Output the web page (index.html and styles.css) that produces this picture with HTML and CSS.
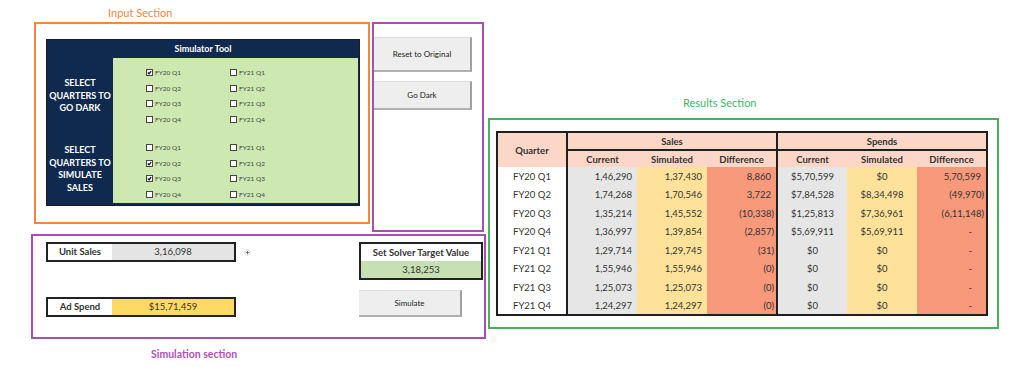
FILE: index.html
```html
<!DOCTYPE html>
<html lang="en">
<head>
    <meta charset="UTF-8">
    <meta name="viewport" content="width=device-width, initial-scale=1.0">
    <title>Simulator Tool</title>
    <link rel="stylesheet" href="styles.css">
</head>
<body>
    <div class="page">
        <div class="left">
            <div class="section-label input-label">Input Section</div>
            <div class="top-row">
                <div class="input-box">
                    <div class="sim-tool">
                        <div class="tool-title">Simulator Tool</div>
                        <div class="tool-group first">
                            <div class="group-label">SELECT<br>QUARTERS TO<br>GO DARK</div>
                            <div class="checks">
                                <div class="check"><span class="cb on"><svg viewBox="0 0 6 6"><path d="M1 3 L2.5 4.5 L5 1.3"/></svg></span>FY20 Q1</div>
                                <div class="check"><span class="cb"></span>FY21 Q1</div>
                                <div class="check"><span class="cb"></span>FY20 Q2</div>
                                <div class="check"><span class="cb"></span>FY21 Q2</div>
                                <div class="check"><span class="cb"></span>FY20 Q3</div>
                                <div class="check"><span class="cb"></span>FY21 Q3</div>
                                <div class="check"><span class="cb"></span>FY20 Q4</div>
                                <div class="check"><span class="cb"></span>FY21 Q4</div>
                            </div>
                        </div>
                        <div class="tool-group second">
                            <div class="group-label">SELECT<br>QUARTERS TO<br>SIMULATE<br>SALES</div>
                            <div class="checks">
                                <div class="check"><span class="cb"></span>FY20 Q1</div>
                                <div class="check"><span class="cb"></span>FY21 Q1</div>
                                <div class="check"><span class="cb on"><svg viewBox="0 0 6 6"><path d="M1 3 L2.5 4.5 L5 1.3"/></svg></span>FY20 Q2</div>
                                <div class="check"><span class="cb"></span>FY21 Q2</div>
                                <div class="check"><span class="cb on"><svg viewBox="0 0 6 6"><path d="M1 3 L2.5 4.5 L5 1.3"/></svg></span>FY20 Q3</div>
                                <div class="check"><span class="cb"></span>FY21 Q3</div>
                                <div class="check"><span class="cb"></span>FY20 Q4</div>
                                <div class="check"><span class="cb"></span>FY21 Q4</div>
                            </div>
                        </div>
                    </div>
                </div>
                <div class="button-box">
                    <div class="xl-button reset">Reset to Original</div>
                    <div class="xl-button dark">Go Dark</div>
                </div>
            </div>
            <div class="simulation-box">
                <div class="fields">
                    <div class="field">
                        <div class="field-name">Unit Sales</div>
                        <div class="field-value units">3,16,098</div>
                    </div>
                    <div class="field">
                        <div class="field-name">Ad Spend</div>
                        <div class="field-value spend">$15,71,459</div>
                    </div>
                </div>
                <svg class="cursor-mark" viewBox="0 0 8 8">
                    <circle cx="4" cy="4" r="3" fill="none" stroke="#9a9a9a" stroke-width="0.8" stroke-dasharray="1.2 0.8"/>
                    <path d="M4 2.2 V5.8 M2.2 4 H5.8" stroke="#555" stroke-width="0.9"/>
                </svg>
                <div class="solver">
                    <div class="solver-box">
                        <div class="solver-title">Set Solver Target Value</div>
                        <div class="solver-value">3,18,253</div>
                    </div>
                    <div class="xl-button simulate">Simulate</div>
                </div>
            </div>
            <div class="section-label simulation-label">Simulation section</div>
        </div>

        <div class="right">
            <div class="section-label results-label">Results Section</div>
            <div class="results-box">
                <table class="results">
                    <colgroup>
                        <col class="col"><col class="col"><col class="col"><col class="col">
                        <col class="col"><col class="col"><col class="col">
                    </colgroup>
                    <thead>
                        <tr class="head-top">
                            <th rowspan="2" class="quarter-head">Quarter</th>
                            <th colspan="3" class="group-head">Sales</th>
                            <th colspan="3" class="group-head">Spends</th>
                        </tr>
                        <tr class="head-sub">
                            <th class="split">Current</th>
                            <th>Simulated</th>
                            <th>Difference</th>
                            <th class="split">Current</th>
                            <th>Simulated</th>
                            <th>Difference</th>
                        </tr>
                    </thead>
                    <tbody id="rows">
                        <!-- rows are filled in by the script below -->
                    </tbody>
                </table>
            </div>
        </div>
    </div>

    <script>
        const results = [
            { quarter: "FY20 Q1", sales: ["1,46,290", "1,37,430", "8,860"], spends: ["$5,70,599", "$0", "5,70,599"] },
            { quarter: "FY20 Q2", sales: ["1,74,268", "1,70,546", "3,722"], spends: ["$7,84,528", "$8,34,498", "(49,970)"] },
            { quarter: "FY20 Q3", sales: ["1,35,214", "1,45,552", "(10,338)"], spends: ["$1,25,813", "$7,36,961", "(6,11,148)"] },
            { quarter: "FY20 Q4", sales: ["1,36,997", "1,39,854", "(2,857)"], spends: ["$5,69,911", "$5,69,911", "-"] },
            { quarter: "FY21 Q1", sales: ["1,29,714", "1,29,745", "(31)"], spends: ["$0", "$0", "-"] },
            { quarter: "FY21 Q2", sales: ["1,55,946", "1,55,946", "(0)"], spends: ["$0", "$0", "-"] },
            { quarter: "FY21 Q3", sales: ["1,25,073", "1,25,073", "(0)"], spends: ["$0", "$0", "-"] },
            { quarter: "FY21 Q4", sales: ["1,24,297", "1,24,297", "(0)"], spends: ["$0", "$0", "-"] },
        ];

        function diffClass(value) {
            if (value === "-") return "diff dash";
            return value.startsWith("(") ? "diff" : "diff pos";
        }

        const body = document.getElementById('rows');
        results.forEach(row => {
            const tr = document.createElement('tr');
            tr.innerHTML = `
                <td class="quarter">${row.quarter}</td>
                <td class="current split num">${row.sales[0]}</td>
                <td class="simulated num">${row.sales[1]}</td>
                <td class="${diffClass(row.sales[2])}">${row.sales[2]}</td>
                <td class="current split money">${row.spends[0]}</td>
                <td class="simulated money">${row.spends[1]}</td>
                <td class="${diffClass(row.spends[2])}">${row.spends[2]}</td>
            `;
            body.appendChild(tr);
        });
    </script>
</body>
</html>
```

FILE: styles.css
```css
body {
    margin: 0;
    background: white;
    font-family: Lato, "Liberation Sans", sans-serif;
    color: #333;
}
.page {
    display: flex;
    align-items: flex-start;
    gap: 2px;
    padding-left: 31px;
}
.left {
    width: 455px;
}
.section-label {
    font-size: 11px;
}
.input-label {
    color: #f0883d;
    height: 16px;
    line-height: 14px;
    padding-top: 6px;
    padding-left: 77px;
}
.top-row {
    display: flex;
    align-items: flex-start;
    gap: 2px;
    margin-left: 3px;
}
.input-box {
    box-sizing: border-box;
    width: 336px;
    height: 202px;
    border: 2px solid #f0883d;
    padding: 15px 0 0 10px;
}
.sim-tool {
    width: 314px;
    height: 167px;
    box-sizing: border-box;
    border: 1px solid #1b1b1b;
    background-color: #0f2a4e;
    display: flex;
    flex-direction: column;
}
.tool-title {
    height: 18px;
    line-height: 18px;
    text-align: center;
    color: white;
    font-weight: 700;
    font-size: 9px;
}
.tool-group {
    display: flex;
}
.tool-group.first {
    height: 76px;
}
.tool-group.second {
    height: 70px;
}
.group-label {
    width: 66px;
    display: flex;
    align-items: center;
    justify-content: center;
    text-align: center;
    color: white;
    font-weight: 700;
    font-size: 9px;
    line-height: 12.5px;
}
.checks {
    flex: 1;
    margin-right: 1px;
    background-color: #cde9b1;
    display: grid;
    grid-template-columns: 84px 84px;
    grid-auto-rows: 15.5px;
    padding-left: 33px;
}
.tool-group.first .checks {
    padding-top: 7px;
}
.tool-group.second .checks {
    padding-top: 6px;
    margin-bottom: 1px;
}
.check {
    display: flex;
    align-items: center;
    gap: 2px;
    font-size: 6.5px;
    color: #444;
}
.cb {
    box-sizing: border-box;
    width: 7px;
    height: 7px;
    border: 1px solid #444;
    background-color: white;
    display: flex;
}
.cb svg {
    width: 5px;
    height: 5px;
}
.cb svg path {
    fill: none;
    stroke: #111;
    stroke-width: 1.5;
}
.button-box {
    box-sizing: border-box;
    width: 112px;
    height: 210px;
    border: 2px solid #a651ad;
    padding-top: 13px;
}
.xl-button {
    box-sizing: border-box;
    background-color: #eeeeee;
    border-top: 1px solid #dcdcdc;
    border-right: 2px solid #a0a0a0;
    border-bottom: 2px solid #b0b0b0;
    display: flex;
    align-items: center;
    justify-content: center;
    font-size: 8px;
    color: #222;
}
.reset {
    width: 98px;
    height: 35px;
}
.dark {
    width: 98px;
    height: 29px;
    margin-top: 9px;
}
.simulation-box {
    box-sizing: border-box;
    width: 455px;
    height: 105px;
    margin-top: 2px;
    border: 2px solid #a651ad;
    padding: 6px 1px 0 13px;
    display: flex;
    align-items: flex-start;
}
.fields {
    width: 190px;
    height: 75px;
    display: flex;
    flex-direction: column;
    justify-content: space-between;
}
.field {
    box-sizing: border-box;
    height: 20px;
    border: 2px solid #222;
    display: grid;
    grid-template-columns: 64px 1fr;
    font-size: 9.5px;
    line-height: 16px;
    text-align: center;
}
.field-name {
    font-weight: 700;
    background-color: white;
}
.units {
    background-color: #e4e4e4;
}
.spend {
    background-color: #ffd966;
}
.cursor-mark {
    width: 7px;
    height: 7px;
    margin: 7px 0 0 8px;
}
.solver {
    margin-left: auto;
    width: 124px;
}
.solver-box {
    box-sizing: border-box;
    height: 38px;
    border: 2px solid #222;
    font-size: 9.5px;
    text-align: center;
}
.solver-title {
    height: 17px;
    line-height: 17px;
    font-weight: 700;
}
.solver-value {
    height: 17px;
    line-height: 17px;
    background-color: #c6e0b4;
}
.simulate {
    width: 103px;
    height: 27px;
    margin-top: 10px;
}
.simulation-label {
    color: #b04fb4;
    font-weight: 700;
    font-size: 10.5px;
    line-height: 30px;
    padding-left: 120px;
}
.right {
    width: 511px;
    padding-top: 96px;
}
.results-label {
    color: #3cb867;
    line-height: 14px;
    padding-left: 195px;
    margin-bottom: 8px;
}
.results-box {
    box-sizing: border-box;
    width: 511px;
    height: 211px;
    border: 2px solid #4caf5a;
    padding: 11px 0 0 6px;
}
.results {
    border-collapse: collapse;
    border: 2px solid #1f1f1f;
    font-size: 9.5px;
    table-layout: fixed;
    width: 491px;
}
.results .col {
    width: 70px;
}
.results th,
.results td {
    box-sizing: border-box;
    padding: 0;
    white-space: nowrap;
}
.results th {
    background-color: #fcd6c6;
    font-weight: 700;
    text-align: center;
}
.head-top th {
    height: 18px;
}
.head-sub th {
    height: 17px;
}
.group-head {
    border-left: 2px solid #1f1f1f;
    border-bottom: 2px solid #1f1f1f;
}
.results .split {
    border-left: 2px solid #1f1f1f;
}
.results td {
    height: 18.5px;
}
.results .quarter {
    text-align: center;
    background-color: white;
}
.results .current {
    background-color: #e6e6e6;
}
.results .simulated {
    background-color: #fee29a;
}
.results .num {
    text-align: right;
    padding-right: 5px;
}
.results .money {
    text-align: center;
}
.results .diff {
    background-color: #f7997a;
    text-align: right;
    padding-right: 2px;
}
.results .diff.pos {
    padding-right: 5px;
}
.results .diff.dash {
    padding-right: 14px;
}
```
